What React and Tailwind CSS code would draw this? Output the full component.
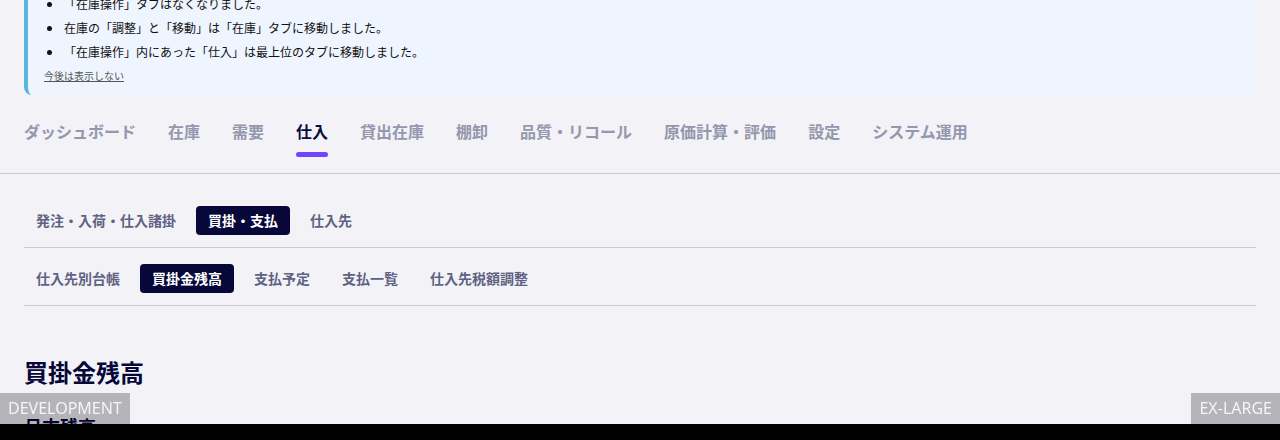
import React, { useState } from 'react';

const mainTabs = ['ダッシュボード', '在庫', '需要', '仕入', '貸出在庫', '棚卸', '品質・リコール', '原価計算・評価', '設定', 'システム運用'];
const groupTabs = ['発注・入荷・仕入諸掛', '買掛・支払', '仕入先'];
const pageTabs = ['仕入先別台帳', '買掛金残高', '支払予定', '支払一覧', '仕入先税額調整'];

const notices = [
    '「在庫操作」タブはなくなりました。',
    '在庫の「調整」と「移動」は「在庫」タブに移動しました。',
    '「在庫操作」内にあった「仕入」は最上位のタブに移動しました。',
];

const SubTabs = ({ items, active, onSelect, className }) => (
    <div className={`flex gap-2 border-b border-[#c9c9d9] pb-3 ${className}`}>
        {items.map((item) => (
            <button
                key={item}
                onClick={() => onSelect(item)}
                className={`px-3 py-1 rounded text-sm leading-[21px] font-bold ${
                    item === active ? 'bg-[#07073a] text-white' : 'text-[#5f6282]'
                }`}
            >
                {item}
            </button>
        ))}
    </div>
);

const App = () => {
    const [tab, setTab] = useState('仕入');
    const [group, setGroup] = useState('買掛・支払');
    const [page, setPage] = useState('買掛金残高');

    return (
        <div
            className="h-[440px] overflow-hidden bg-[#f2f2f7] text-[#07073a]"
            style={{ fontFamily: '"Noto Sans CJK JP", "Noto Sans", sans-serif' }}
        >
            <div className="-mt-6">
                <div className="px-6">
                    <div className="bg-[#eef5fe] border-l-4 border-[#5ab4e0] rounded-lg pt-4 pb-[11px] pl-4">
                        <ul className="text-xs text-[#111]">
                            {notices.map((n) => (
                                <li key={n} className="flex items-center leading-6">
                                    <span className="ml-[3px] mr-3 w-[5px] h-[5px] rounded-full bg-[#111]" />
                                    {n}
                                </li>
                            ))}
                        </ul>
                        <button className="mt-1 block text-[10px] leading-4 text-[#555] underline">今後は表示しない</button>
                    </div>
                </div>

                <nav className="mt-6 flex gap-8 px-6 border-b border-[#c9c9d9]">
                    {mainTabs.map((t) => (
                        <button key={t} onClick={() => setTab(t)} className="flex flex-col items-stretch pb-4">
                            <span className={`text-base leading-6 font-bold ${t === tab ? 'text-[#0c0c3c]' : 'text-[#9497ad]'}`}>{t}</span>
                            <span className={`mt-[9px] h-[5px] rounded-full ${t === tab ? 'bg-[#6e45f8]' : 'bg-transparent'}`} />
                        </button>
                    ))}
                </nav>

                <div className="px-6 pt-8">
                    <SubTabs items={groupTabs} active={group} onSelect={setGroup} />
                    <SubTabs items={pageTabs} active={page} onSelect={setPage} className="pt-4" />

                    <h1 className="mt-[50px] text-2xl leading-8 font-bold">買掛金残高</h1>
                    <h2 className="mt-6 text-lg leading-7 font-bold">月末残高</h2>
                </div>
            </div>

            <div className="fixed left-0 bottom-4 bg-black/25 text-white/85 text-base leading-[31px] px-2" style={{ fontFamily: '"Noto Sans", sans-serif' }}>
                DEVELOPMENT
            </div>
            <div className="fixed right-0 bottom-4 bg-black/25 text-white/85 text-base leading-[31px] px-2" style={{ fontFamily: '"Noto Sans", sans-serif' }}>
                EX-LARGE
            </div>
            <div className="fixed left-0 right-0 bottom-0 h-4 bg-black" />
        </div>
    );
};

export default App;
